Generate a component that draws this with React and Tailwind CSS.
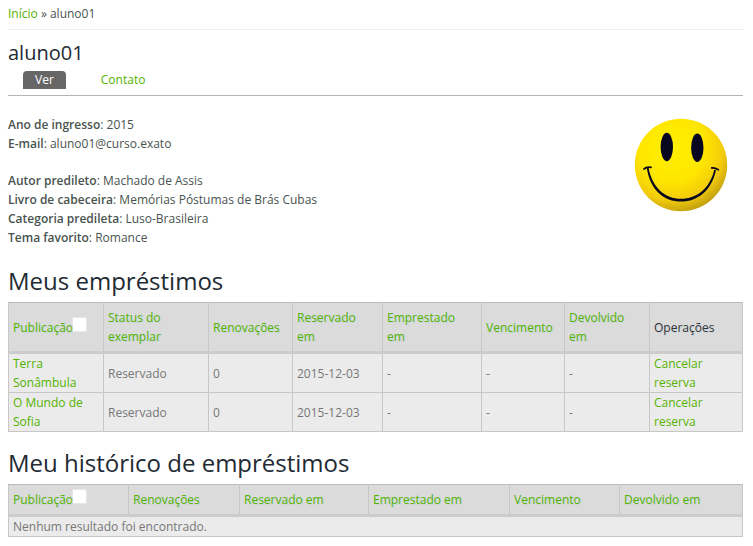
const linkClass = "text-[#54b300] no-underline hover:underline";

function SortLink({ children, active }) {
  return (
    <a href="#" className={linkClass}>
      {children}
      {active && (
        <span className="inline-block size-[13px] bg-white align-[1px] shadow-[0_0_2px_#ffffff]" />
      )}
    </a>
  );
}

function DataTable({ columns, widths, children }) {
  return (
    <table className="w-full table-fixed border-collapse border border-[#bbbbbb] text-left">
      <colgroup>
        {widths.map((width, i) => (
          <col key={i} className={width} />
        ))}
      </colgroup>
      <thead>
        <tr className="bg-[#dbdbdb]">
          {columns.map((name) => (
            <th
              key={name}
              className="border border-b-3 border-[#c7c7c7] border-t-[#bbbbbb] border-b-[#cccccc] py-[5px] pr-3 pl-1 align-middle font-normal text-[#333333] [text-shadow:1px_1px_1px_#c4d4dc]"
            >
              {name === "Operações" ? (
                name
              ) : (
                <span className="-mr-2 block pr-2">
                  <SortLink active={name === "Publicação"}>{name}</SortLink>
                </span>
              )}
            </th>
          ))}
        </tr>
      </thead>
      <tbody>{children}</tbody>
    </table>
  );
}

function Field({ label, value }) {
  return (
    <p>
      <strong className="font-semibold">{label}</strong>: {value}
    </p>
  );
}

function Smiley() {
  return (
    <svg viewBox="0 0 94 94" className="size-[94px]" role="img" aria-label="Foto de aluno01">
      <defs>
        <radialGradient id="face" cx="0.4" cy="0.32" r="0.72">
          <stop offset="0" stopColor="#fff000" />
          <stop offset="0.5" stopColor="#ffe600" />
          <stop offset="0.78" stopColor="#f2cb0b" />
          <stop offset="1" stopColor="#bd9b12" />
        </radialGradient>
      </defs>
      <circle cx="47" cy="47" r="46.2" fill="url(#face)" />
      <ellipse cx="32.8" cy="29" rx="6.2" ry="14.2" fill="#09071f" />
      <ellipse cx="63.3" cy="29.8" rx="6.2" ry="14.2" fill="#09071f" />
      <path
        d="M12.8 50 C16 72 30 83.6 47 83.6 C64 83.6 78 72 82 52 L80.2 52 C76 70 63 80.8 47 80.8 C31 80.8 18.5 70 14.6 50 Z"
        fill="#09071f"
      />
      <path
        d="M10 51 Q12.5 48.6 17 49.4 M77.8 50 Q81 49.6 84.3 51.8"
        fill="none"
        stroke="#09071f"
        strokeWidth="1.8"
        strokeLinecap="round"
      />
    </svg>
  );
}

const loanColumns = [
  "Publicação",
  "Status do exemplar",
  "Renovações",
  "Reservado em",
  "Emprestado em",
  "Vencimento",
  "Devolvido em",
  "Operações",
];
const loanWidths = ["w-[95px]", "w-[105px]", "w-[84px]", "w-[90px]", "w-[99px]", "w-[83px]", "w-[85px]", "w-auto"];

const historyColumns = [
  "Publicação",
  "Renovações",
  "Reservado em",
  "Emprestado em",
  "Vencimento",
  "Devolvido em",
];
const historyWidths = ["w-[120px]", "w-[111px]", "w-[129px]", "w-[141px]", "w-[110px]", "w-auto"];

const loans = [
  { title: "Terra Sonâmbula", cells: ["Reservado", "0", "2015-12-03", "-", "-", "-"] },
  { title: "O Mundo de Sofia", cells: ["Reservado", "0", "2015-12-03", "-", "-", "-"] },
];

const cellClass = "border border-[#c7c7c7] bg-[#ebebeb] px-1 align-middle text-[#777777]";

export default function App() {
  return (
    <main className="bg-white pr-[10px] pl-2 font-['Open_Sans','Noto_Sans',sans-serif] text-[12px] leading-[19px] text-[#48534f]">
      <nav className="border-b border-[#eeeeee] pt-1 pb-[6px]">
        <a href="#" className={linkClass}>
          Início
        </a>{" "}
        » aluno01
      </nav>
      <h1 className="mt-[9px] text-[20px] leading-[28px] text-[#222a33]">aluno01</h1>
      <nav className="mt-1 flex gap-[35px] border-b border-[#b5b5b5] pb-[6px] pl-[15px] leading-[18px]">
        <a href="#" className="rounded-t-[4px] bg-[#666666] px-3 text-white">
          Ver
        </a>
        <a href="#" className={linkClass}>
          Contato
        </a>
      </nav>

      <section className="mt-[19px] flex items-start justify-between pr-[15px]">
        <div>
          <Field label="Ano de ingresso" value="2015" />
          <Field label="E-mail" value="aluno01@curso.exato" />
          <div className="mt-[18px]">
            <Field label="Autor predileto" value="Machado de Assis" />
            <Field label="Livro de cabeceira" value="Memórias Póstumas de Brás Cubas" />
            <Field label="Categoria predileta" value="Luso-Brasileira" />
            <Field label="Tema favorito" value="Romance" />
          </div>
        </div>
        <div className="pt-[3px]">
          <Smiley />
        </div>
      </section>

      <h2 className="mt-[17px] mb-1 text-[24px] leading-[34px] text-[#222a33]">Meus empréstimos</h2>
      <DataTable columns={loanColumns} widths={loanWidths}>
        {loans.map((loan) => (
          <tr key={loan.title}>
            <td className={cellClass}>
              <a href="#" className={linkClass}>
                {loan.title}
              </a>
            </td>
            {loan.cells.map((value, i) => (
              <td key={i} className={cellClass}>
                {value}
              </td>
            ))}
            <td className={cellClass}>
              <a href="#" className={linkClass}>
                Cancelar reserva
              </a>
            </td>
          </tr>
        ))}
      </DataTable>

      <h2 className="mt-[14px] mb-1 text-[24px] leading-[34px] text-[#222a33]">
        Meu histórico de empréstimos
      </h2>
      <DataTable columns={historyColumns} widths={historyWidths}>
        <tr>
          <td colSpan={6} className={cellClass}>
            Nenhum resultado foi encontrado.
          </td>
        </tr>
      </DataTable>
    </main>
  );
}
